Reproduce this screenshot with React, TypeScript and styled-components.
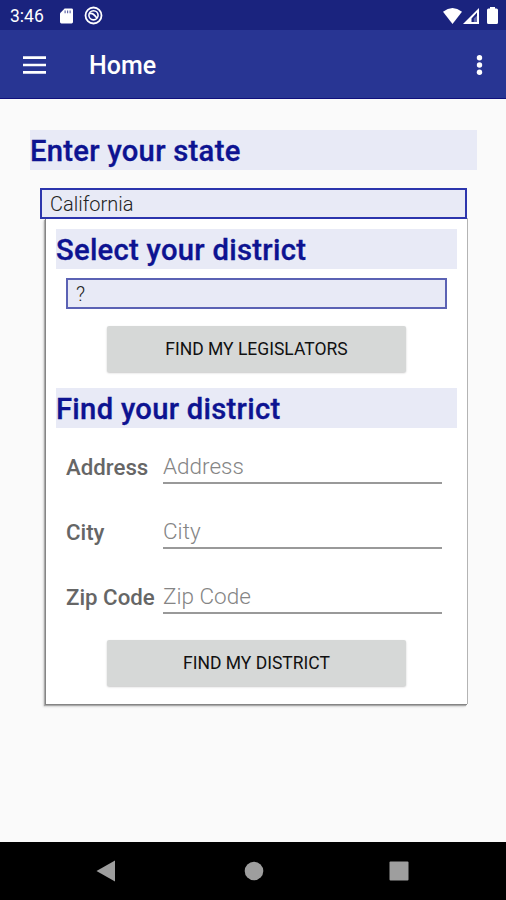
import React from "react";
import styled, { createGlobalStyle } from "styled-components";

const GlobalStyle = createGlobalStyle`
  * { box-sizing: border-box; }
  body { margin: 0; background: #fafafa; font-family: Roboto, "Liberation Sans", sans-serif; }
`;

const Screen = styled.div`
  width: 506px;
  height: 900px;
  display: flex;
  flex-direction: column;
  overflow: hidden;
  background: #fafafa;
`;

const StatusBar = styled.div`
  height: 30px;
  flex: none;
  display: flex;
  align-items: center;
  padding: 1px 8px 0 10px;
  background: #1a237e;
  color: #fff;
`;

const Clock = styled.span`
  width: 50px;
  font-size: 17.5px;
  line-height: 28px;
  white-space: nowrap;
`;

const StatusIcon = styled.svg<{ $gap?: number }>`
  display: block;
  flex: none;
  margin-left: ${({ $gap }) => $gap ?? 0}px;
`;

const Spacer = styled.div`
  flex: 1;
`;

const AppBar = styled.header`
  height: 69px;
  flex: none;
  display: flex;
  align-items: center;
  padding: 1px 22px 0 23px;
  background: #283593;
  border-bottom: 1px solid #10107c;
  color: #fff;
`;

const IconButton = styled.button`
  display: block;
  padding: 0;
  border: 0;
  background: none;
  color: inherit;
  svg { display: block; }
`;

const Title = styled.h1`
  margin: 2px 0 0 43px;
  font-size: 25px;
  font-weight: 500;
  line-height: 32px;
`;

const Content = styled.main`
  flex: 1;
  padding: 31px 29px 0 30px;
`;

const Heading = styled.h2<{ $top?: number }>`
  height: 40px;
  margin: ${({ $top }) => $top ?? 0}px 0 0;
  background: #e8eaf6;
  color: #0d1391;
  font-size: 29.2px;
  font-weight: 500;
  line-height: 43px;
  letter-spacing: 0.29px;
  -webkit-text-stroke: 0.35px #0d1391;
  white-space: nowrap;
`;

const Select = styled.div<{ $variant: "state" | "district" }>`
  position: relative;
  height: 31px;
  margin: ${({ $variant }) => ($variant === "state" ? "18px 10px 0" : "9px 10px 0")};
  padding-left: 8px;
  border: 2px solid ${({ $variant }) => ($variant === "state" ? "#2c35ad" : "#5b62b4")};
  background: #e8eaf6;
  color: #222;
  font-size: 20px;
  font-weight: 300;
  line-height: 28px;
`;

const Card = styled.section`
  height: 486px;
  margin: -1px 9px 0 16px;
  padding: 11px 10px 0 10px;
  background: #fff;
  border-right: 1px solid #b4b4b4;
  box-shadow: -1px 1px 0 #858585, -2px 2px 1px #aaa, -3px 3px 2px #e0e0e0;
`;

const ActionButton = styled.button<{ $top: number }>`
  display: block;
  width: 299px;
  height: 46px;
  margin: ${({ $top }) => $top}px 0 0 51px;
  padding: 0;
  border: 0;
  border-radius: 2px;
  background: #d6d8d7;
  box-shadow: 0 1px 2px rgba(0, 0, 0, 0.22);
  color: #111;
  font: 400 17.5px/47px Roboto, sans-serif;
`;

const Fields = styled.div`
  display: grid;
  grid-auto-rows: 65px;
  margin: 5px 15px 0 10px;
`;

const Field = styled.label`
  display: grid;
  grid-template-columns: 97px 1fr;
  align-items: end;
  padding-bottom: 14px;
`;

const FieldName = styled.span`
  padding-bottom: 1px;
  color: #666;
  font-size: 22.25px;
  font-weight: 500;
  line-height: 32px;
  white-space: nowrap;
`;

const Input = styled.input`
  width: 100%;
  height: 36px;
  padding: 2px 0 0;
  border: 0;
  border-bottom: 2px solid #999;
  outline: 0;
  background: transparent;
  font: 300 22.5px/32px Roboto, sans-serif;
  &::placeholder { color: #858585; opacity: 1; }
`;

const NavBar = styled.nav`
  height: 58px;
  flex: none;
  display: flex;
  align-items: center;
  justify-content: space-between;
  padding: 0 97px 0 96px;
  background: #000;
  color: #9e9e9e;
`;

const HomeKey = styled.svg`
  margin-left: 3px;
`;

const fields = ["Address", "City", "Zip Code"];

export default function App() {
  return (
    <Screen>
      <GlobalStyle />
      <StatusBar>
        <Clock>3:46</Clock>
        <StatusIcon width="13" height="16" viewBox="0 0 14 17">
          <path d="M5 0.5h7.5Q14 0.5 14 2v13q0 1.5-1.5 1.5h-11Q0 16.5 0 15V5.5z" fill="#fff" />
          <path d="M5.5 2.5v3M8.2 2.5v3M10.9 2.5v3" stroke="#5b61a4" strokeWidth="1.2" />
        </StatusIcon>
        <StatusIcon $gap={11} width="19" height="19" viewBox="0 0 19 19" fill="none" stroke="#fff">
          <circle cx="9.5" cy="9.5" r="8" strokeWidth="1.8" />
          <circle cx="9.5" cy="9.3" r="4.6" strokeWidth="1.6" />
          <path d="M5.5 7.6c3.2-.8 4.6 1 7.6 4.8" strokeWidth="1.7" />
        </StatusIcon>
        <Spacer />
        <StatusIcon width="19" height="16" viewBox="0 0 19 16">
          <path d="M0 3.8Q9.5-3.6 19 3.8L9.5 16z" fill="#fff" />
        </StatusIcon>
        <StatusIcon $gap={1} width="16" height="16" viewBox="0 0 16 16">
          <path d="M16 0v16H0zM14 4.5L8.5 10.5V14H14z" fill="#fff" fillRule="evenodd" />
          <path d="M10.8 14v-3.6L14 7.8V14z" fill="#6268ad" />
        </StatusIcon>
        <StatusIcon $gap={8} width="11" height="17" viewBox="0 0 11 17">
          <path d="M3 0h5v1.5h1.5Q11 1.5 11 3v12.5Q11 17 9.5 17h-8Q0 17 0 15.5V3q0-1.5 1.5-1.5H3z" fill="#fff" />
        </StatusIcon>
      </StatusBar>

      <AppBar>
        <IconButton aria-label="Open menu">
          <svg width="23" height="18" viewBox="0 0 23 18">
            <path d="M0 1.6h23M0 9h23M0 16.4h23" stroke="#fff" strokeWidth="2.6" />
          </svg>
        </IconButton>
        <Title>Home</Title>
        <Spacer />
        <IconButton aria-label="More options">
          <svg width="9" height="22" viewBox="0 0 9 22" fill="#fff">
            <circle cx="4.5" cy="3.8" r="2.7" />
            <circle cx="4.5" cy="11" r="2.7" />
            <circle cx="4.5" cy="18.2" r="2.7" />
          </svg>
        </IconButton>
      </AppBar>

      <Content>
        <Heading>Enter your state</Heading>
        <Select $variant="state">California</Select>
        <Card>
          <Heading>Select your district</Heading>
          <Select $variant="district">?</Select>
          <ActionButton $top={17}>FIND MY LEGISLATORS</ActionButton>
          <Heading $top={16}>Find your district</Heading>
          <Fields>
            {fields.map((name) => (
              <Field key={name}>
                <FieldName>{name}</FieldName>
                <Input placeholder={name} />
              </Field>
            ))}
          </Fields>
          <ActionButton $top={12}>FIND MY DISTRICT</ActionButton>
        </Card>
      </Content>

      <NavBar>
        <svg width="19" height="22" viewBox="0 0 19 22">
          <path d="M19 .5v21L.5 11z" fill="currentColor" />
        </svg>
        <HomeKey width="20" height="20" viewBox="0 0 20 20">
          <circle cx="10" cy="10" r="9.3" fill="currentColor" />
        </HomeKey>
        <svg width="20" height="20" viewBox="0 0 20 20">
          <rect x=".5" y=".5" width="19" height="19" rx="1" fill="currentColor" />
        </svg>
      </NavBar>
    </Screen>
  );
}
